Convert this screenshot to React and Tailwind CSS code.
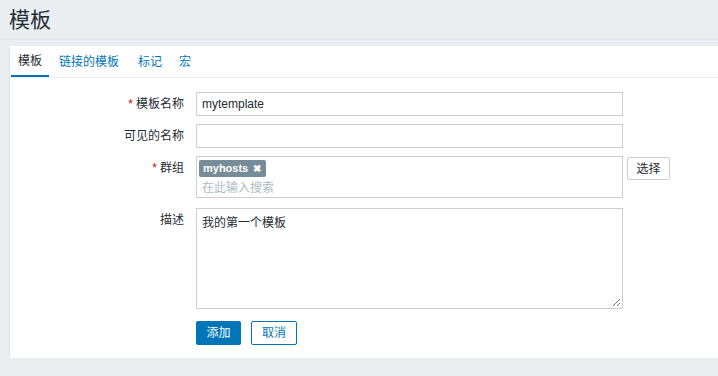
export default function App() {
  const font = { fontFamily: '"Liberation Sans", Arial, "Noto Sans CJK SC", sans-serif' };
  return (
    <div className="w-[718px] h-[376px] bg-[#ebeef0] text-[12px] text-[#1f2c33] overflow-hidden" style={font}>
      <div className="h-[40px] border-b border-[#dfe4e7] pl-[9px] flex items-center">
        <h1 className="text-[21px] leading-none text-[#1f2c33] font-normal">模板</h1>
      </div>
      <div className="ml-[9px] mt-[6px] h-[312px] bg-white border-l border-[#dfe4e7]">
        <div className="flex h-[32px] border-b border-[#ebeef0] pl-[1px]">
          <div className="px-[7px] flex items-center border-b-2 border-[#0275b8] text-[#1f2c33]">模板</div>
          <div className="px-[10px] flex items-center text-[#0275b8]">链接的模板</div>
          <div className="px-[8px] flex items-center text-[#0275b8] ml-[1px]">标记</div>
          <div className="px-[9px] flex items-center text-[#0275b8]">宏</div>
        </div>
        <div className="pt-[14px] flex flex-col gap-[8px]">
          <Row label="模板名称" required>
            <div className="w-[427px] h-[24px] border border-[#cfcfcf] px-[5px] flex items-center">mytemplate</div>
          </Row>
          <Row label="可见的名称">
            <div className="w-[427px] h-[24px] border border-[#cfcfcf]"></div>
          </Row>
          <Row label="群组" required>
            <div className="flex items-start gap-[4px]">
              <div className="w-[427px] h-[42px] border border-[#cfcfcf] px-[2px] pt-[2px]">
                <div className="inline-flex items-center h-[17px] bg-[#768d99] text-white text-[11px] font-bold pl-[4px] pr-[5px] gap-[5px] rounded-[2px]">
                  <span>myhosts</span>
                  <span className="text-[10px]">✖</span>
                </div>
                <div className="text-[#acbbc2] px-[3px] mt-[2px]">在此输入搜索</div>
              </div>
              <button className="h-[23px] w-[43px] border border-[#cfcfcf] rounded-[2px] bg-white text-[#1f2c33] mt-[1px]">选择</button>
            </div>
          </Row>
          <div className="mt-[2px]">
            <Row label="描述">
              <div className="w-[427px] h-[101px] border border-[#cfcfcf] px-[5px] pt-[5px] relative">
                我的第一个模板
                <svg className="absolute right-[1px] bottom-[1px]" width="9" height="9" viewBox="0 0 9 9">
                  <path d="M8 1L1 8M8 5L5 8" stroke="#777" strokeWidth="1" />
                </svg>
              </div>
            </Row>
          </div>
          <div className="flex gap-[10px] pl-[186px] pt-[4px]">
            <button className="h-[24px] w-[45px] bg-[#0275b8] text-white rounded-[2px]">添加</button>
            <button className="h-[24px] w-[46px] border border-[#0275b8] text-[#0275b8] bg-white rounded-[2px]">取消</button>
          </div>
        </div>
      </div>
    </div>
  );
}

function Row({ label, required, children }) {
  return (
    <div className="flex items-start">
      <div className="w-[180px] pr-[6px] text-right h-[24px] flex items-center justify-end">
        {required && <span className="text-[#d40000] mr-[3px]">*</span>}
        <span>{label}</span>
      </div>
      <div className="ml-[6px]">{children}</div>
    </div>
  );
}
